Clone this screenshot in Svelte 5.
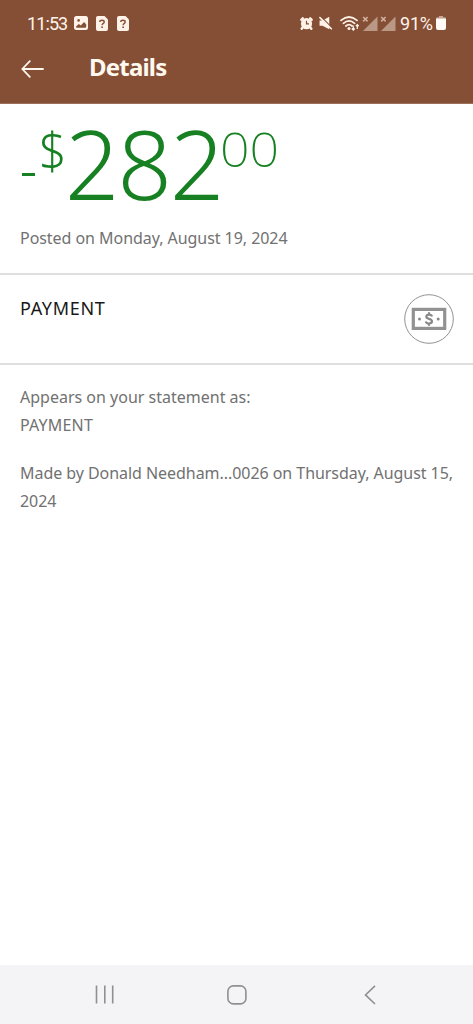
<script>
  const notices = [0, 1];
  const signals = [0, 1];
</script>

<div class="screen">
  <header>
    <div class="status">
      <span class="clock">11:53</span>
      <svg class="photo" width="14" height="14" viewBox="0 0 14 14">
        <rect width="14" height="14" rx="2.500" fill="#fff3e9" />
        <circle cx="4.600" cy="4.400" r="1.300" fill="#854f36" />
        <path d="M2 10.600 4.800 8l2 1.500L10 6l2.200 2.300v2.500q0 1-1 1H3q-1 0-1-1.200Z" fill="#854f36" />
      </svg>
      {#each notices as n (n)}
        <svg class="notice" width="12" height="15" viewBox="0 0 12 15">
          <path d="M2 0h6.500L12 3.500V13q0 2-2 2H2q-2 0-2-2V2Q0 0 2 0Z" fill="#fff3e9" />
          <path d="M3.700 6Q3.800 4.200 6 4.200t2.200 1.700q0 1-1.200 1.800-.9.600-.9 1.500" fill="none" stroke="#854f36" stroke-width="1.400" />
          <circle cx="6.100" cy="11.200" r=".9" fill="#854f36" />
        </svg>
      {/each}
      <div class="system">
        <svg class="alarm" width="13" height="13" viewBox="0 0 14 14">
          <path d="M1.400 3 3 1.500M12.600 3 11 1.500M2.800 11.300l-1 1.400M11.200 11.300l1 1.400" stroke="#fff3e9" stroke-width="2.600" stroke-linecap="round" />
          <circle cx="7" cy="7.200" r="6" fill="#fff3e9" />
          <path d="M7 4v3.500h2.700" fill="none" stroke="#854f36" stroke-width="1.300" />
        </svg>
        <svg class="mute" width="14" height="14" viewBox="0 0 15 14">
          <path d="M.6 4.400h3.200L11 .4v13.200L3.800 9.900H.6Z" fill="#fff3e9" />
          <path d="M2.200.2 14.400 12.500" stroke="#854f36" stroke-width="1.300" />
          <path d="M1 1.200 13.200 13.200" stroke="#fff3e9" stroke-width="1.700" stroke-linecap="round" />
        </svg>
        <svg class="wifi" width="20" height="15" viewBox="0 0 20 15">
          <path d="M1 4.400q8-6.800 16 0M3.400 7.300q5.600-4.700 11.200 0M5.900 10q3.100-2.600 6.200 0" fill="none" stroke="#fff3e9" stroke-width="1.700" stroke-linecap="round" />
          <circle cx="9" cy="12.600" r="1.500" fill="#fff3e9" />
          <path d="M13.300 9.500v4.500M11.800 12.500l1.500 1.600 1.500-1.600M17.300 13V8.500M15.800 10.200l1.500-1.600 1.500 1.600" fill="none" stroke="#fff3e9" stroke-width="1.200" />
        </svg>
        {#each signals as s (s)}
          <svg class="signal" width="16" height="15" viewBox="0 0 16 15">
            <path d="M15.500.5V15H1Z" fill="#ba9886" />
            <path d="m1.200 1 4.400 4.400m0-4.400-4.400 4.400" stroke="#d0b09f" stroke-width="1.500" />
          </svg>
        {/each}
        <span class="percent">91%</span>
        <svg class="battery" width="10" height="14" viewBox="0 0 10 14">
          <path d="M3 0h4v1.300h1.500q1.500 0 1.500 1.500H0q0-1.500 1.500-1.500H3Z" fill="#c9a897" />
          <path d="M0 2.600h10V12q0 2-2 2H2q-2 0-2-2Z" fill="#fffaf5" />
        </svg>
      </div>
    </div>
    <div class="toolbar">
      <svg width="24" height="18" viewBox="0 0 24 18">
        <path d="M22 9H1.300M8.800 1.200 1.300 9l7.500 7.800" fill="none" stroke="#fff8ef" stroke-width="1.800" stroke-linecap="round" stroke-linejoin="round" />
      </svg>
      <h1>Details</h1>
    </div>
  </header>

  <main>
    <section class="summary">
      <div class="amount">
        <span class="minus"></span>
        <span class="currency">$</span>
        <span class="whole">282</span>
        <span class="cents">00</span>
      </div>
      <p class="posted">Posted on Monday, August 19, 2024</p>
    </section>
    <section class="payee">
      <h2>PAYMENT</h2>
      <svg width="50" height="50" viewBox="0 0 50 50">
        <circle cx="25" cy="25" r="24.300" fill="none" stroke="#929292" stroke-width="1" />
        <rect x="9.300" y="15.400" width="31.400" height="19" fill="none" stroke="#929292" stroke-width="3.200" />
        <circle cx="15.500" cy="25" r="1.500" fill="#888" />
        <circle cx="34.200" cy="25" r="1.500" fill="#888" />
        <path d="M28 22.500Q27.500 20.600 25 20.600t-2.700 2q0 1.700 2.700 2.300t3 2.400q0 2.200-3 2.200-2.700 0-3.200-2M25 18.300v2.300M25 29.300v2.500" fill="none" stroke="#888" stroke-width="2.200" />
      </svg>
    </section>
    <section class="details">
      <p class="label">Appears on your statement as:</p>
      <p class="value">PAYMENT</p>
      <p class="made">Made by Donald Needham...0026 on Thursday, August 15, 2024</p>
    </section>
  </main>

  <nav>
    <svg width="20" height="20" viewBox="0 0 20 20"><path d="M1.500.5v18M9.800.5v18M17.700.5v18" stroke="#909093" stroke-width="1.600" /></svg>
    <svg width="20" height="20" viewBox="0 0 20 20"><rect x=".9" y=".9" width="18" height="18" rx="5.500" fill="none" stroke="#909093" stroke-width="1.600" /></svg>
    <svg width="12" height="20" viewBox="0 0 12 20"><path d="M11 .8 1.500 9.900 11 19" fill="none" stroke="#909093" stroke-width="1.600" /></svg>
  </nav>
</div>

<style>
  :global(body) { margin: 0; background: #fff; }
  .screen { box-sizing: border-box; height: 1024px; display: flex; flex-direction: column; font-family: "Noto Sans", sans-serif; color: #717171; }
  header { height: 104px; box-sizing: border-box; background: #854f36; border-bottom: 1px solid #9d705b; color: #fff3e9; flex: none; }
  svg { display: block; flex: none; }
  .status { display: flex; align-items: center; height: 46px; padding: 0 27px; font-family: Roboto, sans-serif; font-size: 18px; }
  .clock { width: 47px; letter-spacing: -.9px; }
  .notice { margin-left: 8px; }
  .notice + .notice { margin-left: 9px; }
  .system { display: flex; align-items: center; margin-left: auto; }
  .mute { margin-left: 6px; }
  .wifi { margin-left: 7px; }
  .signal { margin-left: 2px; }
  .percent { margin-left: 4px; width: 35px; letter-spacing: -.2px; }
  .battery { margin-left: 1px; }
  .toolbar { display: flex; align-items: center; height: 46px; padding-left: 21px; }
  h1 { margin: -4px 0 0 44px; font-size: 24px; line-height: 30px; font-weight: 700; letter-spacing: -.8px; color: #fff8ef; }
  main { flex: 1; }
  p, h2 { margin: 0; }
  .summary { height: 168px; border-bottom: 2px solid #dfdfdf; padding: 1px 0 0 20px; }
  .amount { display: flex; align-items: flex-start; height: 118px; color: #168022; }
  .minus { width: 13px; height: 3px; margin-top: 68px; background: #168022; margin-left: 2px; }
  .currency { font-size: 48px; line-height: 60px; margin: 16px 0 0 4px; width: 26px; font-weight: 300; transform: scaleY(1.080); }
  .whole { font-size: 95px; line-height: 100px; margin-top: 8px; width: 155px; letter-spacing: -1.700px; font-weight: 300; }
  .cents { font-weight: 250; font-size: 48px; line-height: 60px; margin-top: 14px; letter-spacing: 0; transform: scaleX(1.080); transform-origin: left; }
  .posted { font-size: 16px; line-height: 30px; letter-spacing: -.05px; }
  .payee { height: 88px; border-bottom: 2px solid #dfdfdf; display: flex; justify-content: space-between; padding: 0 19.500px 0 20px; align-items: center; }
  h2 { align-self: flex-start; margin-top: 19px; font-size: 18px; line-height: 28px; font-weight: 400; color: #191919; letter-spacing: .7px; }
  .details { padding: 18px 0 0 20px; font-size: 16px; line-height: 28px; }
  .value { letter-spacing: .2px; }
  .made { margin-top: 20px; letter-spacing: -.05px; }
  nav { flex: none; height: 59px; background: #f4f4f7; display: grid; grid-template-columns: 132px 133px 12px; align-items: center; padding: 1px 97px 0 95px; box-sizing: border-box; }
  nav svg:last-child { margin-left: 4px; }
</style>
